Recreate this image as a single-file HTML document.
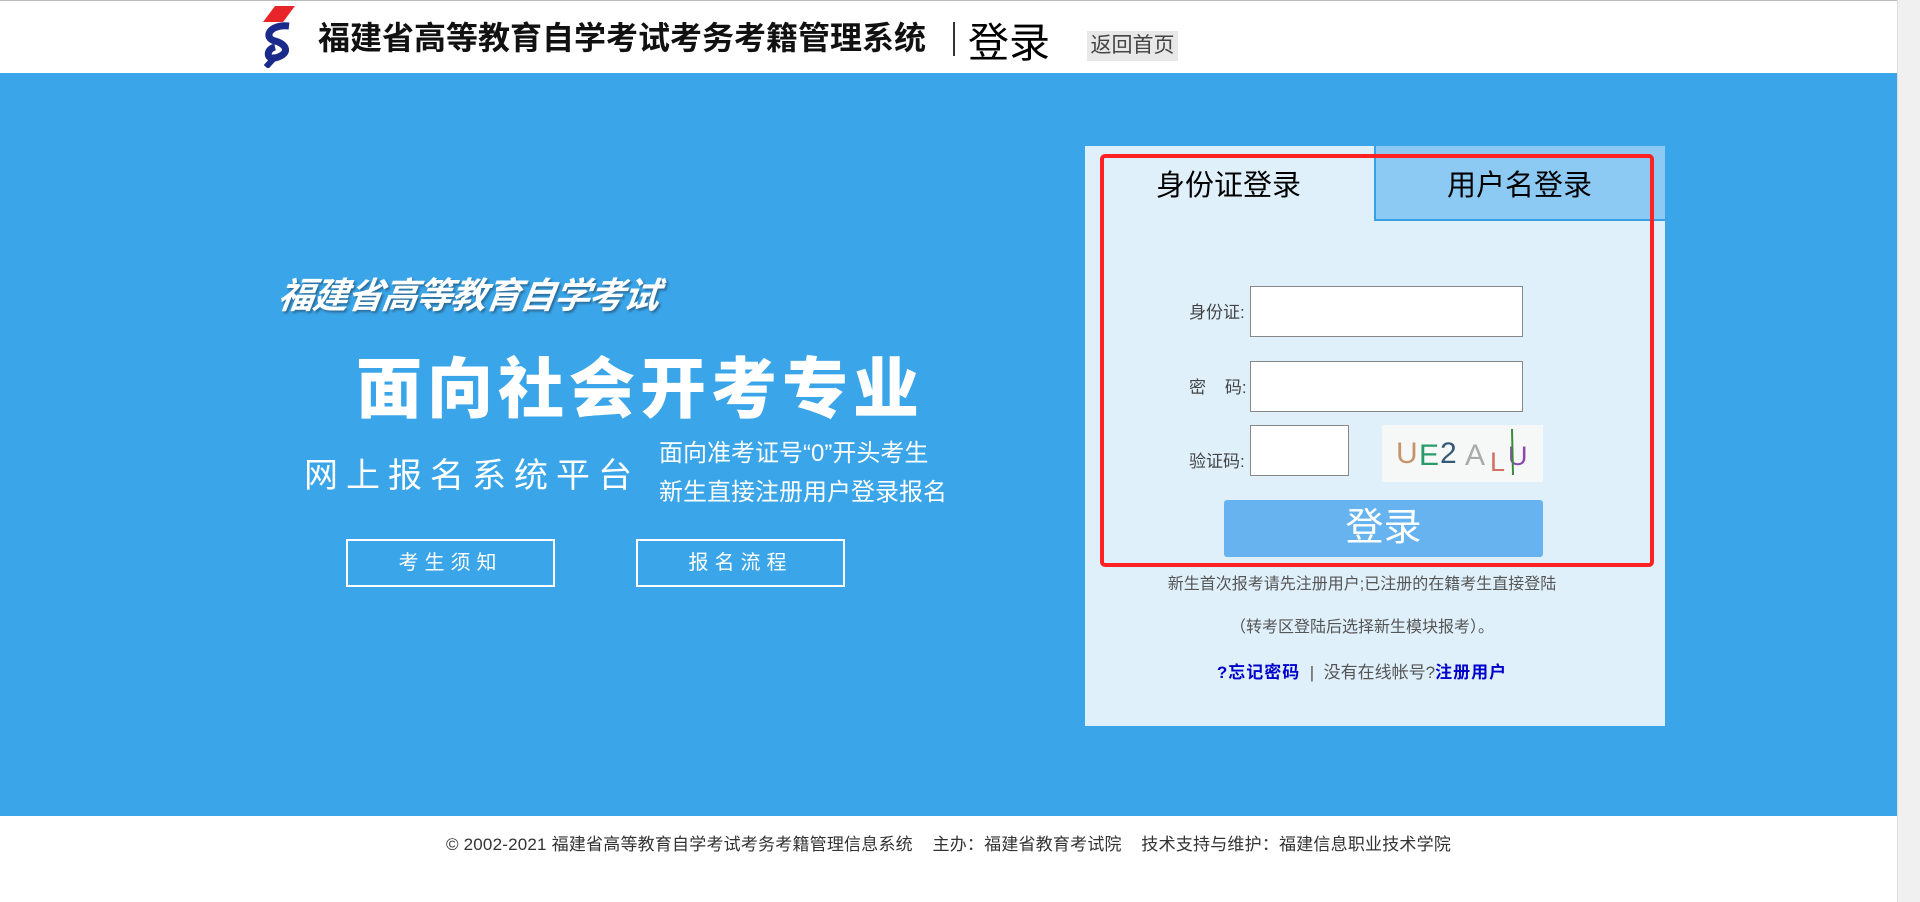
<!DOCTYPE html>
<html><head><meta charset="utf-8"><style>
*{margin:0;padding:0;box-sizing:border-box}
body{width:1920px;height:902px;overflow:hidden;background:#fff;font-family:"Liberation Sans","Noto Sans CJK SC",sans-serif;position:relative}
.abs{position:absolute}
.scroll{left:1897px;top:0;width:23px;height:902px;background:#f0f0f0;border-left:1px solid #ddd}
.band{left:0;top:73px;width:1897px;height:743px;background:#3aa5e8}
.title{left:318px;top:13px;font-size:32px;font-weight:bold;color:#111;white-space:nowrap;font-family:"Noto Sans CJK SC",sans-serif}
.sep{left:953px;top:22px;width:2px;height:34px;background:#333}
.dl{left:968px;top:9px;font-size:41px;color:#000;white-space:nowrap}
.back{left:1087px;top:31px;width:91px;height:30px;background:#e8e8e8;color:#444;font-size:21px;line-height:30px;text-align:center;white-space:nowrap}
.w{color:#fff;white-space:nowrap}
.btn{border:2px solid #fff;color:#fff;font-size:20px;letter-spacing:6px;text-align:center;line-height:44px}
.panel{left:1085px;top:146px;width:580px;height:580px;background:#dff0fb}
.tab2{left:1374px;top:146px;width:291px;height:75px;background:#8ccaf3;border-left:2px solid #3aa0e6;border-bottom:2px solid #3aa0e6}
.tabt{font-size:29px;color:#000;white-space:nowrap}
.red{left:1100px;top:154px;width:554px;height:413px;border:4px solid #ff2222;border-radius:5px}
.lab{font-size:17px;color:#444;white-space:nowrap}
.inp{background:#fff;border:1px solid #888}
.txt{font-size:16px;color:#555;white-space:nowrap;text-align:center;width:580px;left:1072px}
</style></head><body>
<div class="abs" style="left:0;top:0;width:1897px;height:1px;background:#bbb"></div>
<svg class="abs" style="left:261px;top:6px" width="34" height="62" viewBox="0 0 34 62">
<polygon points="14,0 34,0 22,16 2,16" fill="#e8262a"/>
<path d="M28 20 C8 18 2 32 14 35 C26 38 30 48 14 52 C5 54 5 43 14 41" fill="none" stroke="#1a2a8a" stroke-width="7"/>
<path d="M5 61 L15 50" stroke="#1a2a8a" stroke-width="6"/>
</svg>
<div class="abs title">福建省高等教育自学考试考务考籍管理系统</div>
<div class="abs sep"></div>
<div class="abs dl">登录</div>
<div class="abs back">返回首页</div>
<div class="abs band"></div>
<div class="abs w" style="left:279px;top:267px;font-size:36px;font-weight:bold;font-style:italic;transform:skewX(-8deg);text-shadow:2px 2px 2px #2a6c9a;letter-spacing:-1.5px">福建省高等教育自学考试</div>
<div class="abs w" style="left:356px;top:336px;font-size:66px;font-weight:900;letter-spacing:5px;font-family:'Noto Sans CJK SC',sans-serif">面向社会开考专业</div>
<div class="abs w" style="left:304px;top:448px;font-size:34px;letter-spacing:8px">网上报名系统平台</div>
<div class="abs w" style="left:659px;top:434px;font-size:24px;line-height:39px">面向准考证号“0”开头考生<br>新生直接注册用户登录报名</div>
<div class="abs btn" style="left:346px;top:539px;width:209px;height:48px">考生须知</div>
<div class="abs btn" style="left:636px;top:539px;width:209px;height:48px">报名流程</div>
<div class="abs panel"></div>
<div class="abs tab2"></div>
<div class="abs tabt" style="left:1156px;top:162px">身份证登录</div>
<div class="abs tabt" style="left:1447px;top:162px">用户名登录</div>
<div class="abs red"></div>
<div class="abs lab" style="left:1189px;top:298px">身份证:</div>
<div class="abs lab" style="left:1189px;top:373px">密&nbsp;&nbsp;&nbsp;&nbsp;码:</div>
<div class="abs lab" style="left:1189px;top:447px">验证码:</div>
<div class="abs inp" style="left:1250px;top:286px;width:273px;height:51px"></div>
<div class="abs inp" style="left:1250px;top:361px;width:273px;height:51px"></div>
<div class="abs inp" style="left:1250px;top:425px;width:99px;height:51px"></div>
<svg class="abs" style="left:1382px;top:425px" width="161" height="57">
<rect width="161" height="57" fill="#f6f8f8"/>
<text x="14" y="38" font-size="30" font-family="Liberation Sans" fill="#c7936a">U</text>
<text x="37" y="40" font-size="30" font-family="Liberation Sans" fill="#2a9a6a">E</text>
<text x="58" y="38" font-size="30" font-family="Liberation Sans" fill="#345a78">2</text>
<text x="83" y="40" font-size="30" font-family="Liberation Sans" fill="#aaa">A</text>
<text x="108" y="46" font-size="27" font-family="Liberation Sans" fill="#d07060">L</text>
<text x="126" y="40" font-size="27" font-family="Liberation Sans" fill="#8a4ab0">U</text>
<line x1="130" y1="4" x2="131" y2="50" stroke="#3a8a3a" stroke-width="2"/>
</svg>
<div class="abs" style="left:1224px;top:500px;width:319px;height:57px;background:#66b3f0;border-radius:3px;color:#fff;font-size:38px;text-align:center;line-height:57px">登录</div>
<div class="abs txt" style="top:570px">新生首次报考请先注册用户;已注册的在籍考生直接登陆</div>
<div class="abs txt" style="top:613px">（转考区登陆后选择新生模块报考）。</div>
<div class="abs txt" style="top:658px;font-size:17px"><b style="color:#00c;letter-spacing:1px">?忘记密码</b>&nbsp;&nbsp;|&nbsp;&nbsp;没有在线帐号?<b style="color:#00c;letter-spacing:1px">注册用户</b></div>
<div class="abs" style="left:0;top:830px;width:1897px;text-align:center;font-size:17px;letter-spacing:0.2px;color:#333;white-space:nowrap">© 2002-2021 福建省高等教育自学考试考务考籍管理信息系统&nbsp;&nbsp;&nbsp;&nbsp;主办：福建省教育考试院&nbsp;&nbsp;&nbsp;&nbsp;技术支持与维护：福建信息职业技术学院</div>
<div class="abs scroll"></div>
</body></html>
